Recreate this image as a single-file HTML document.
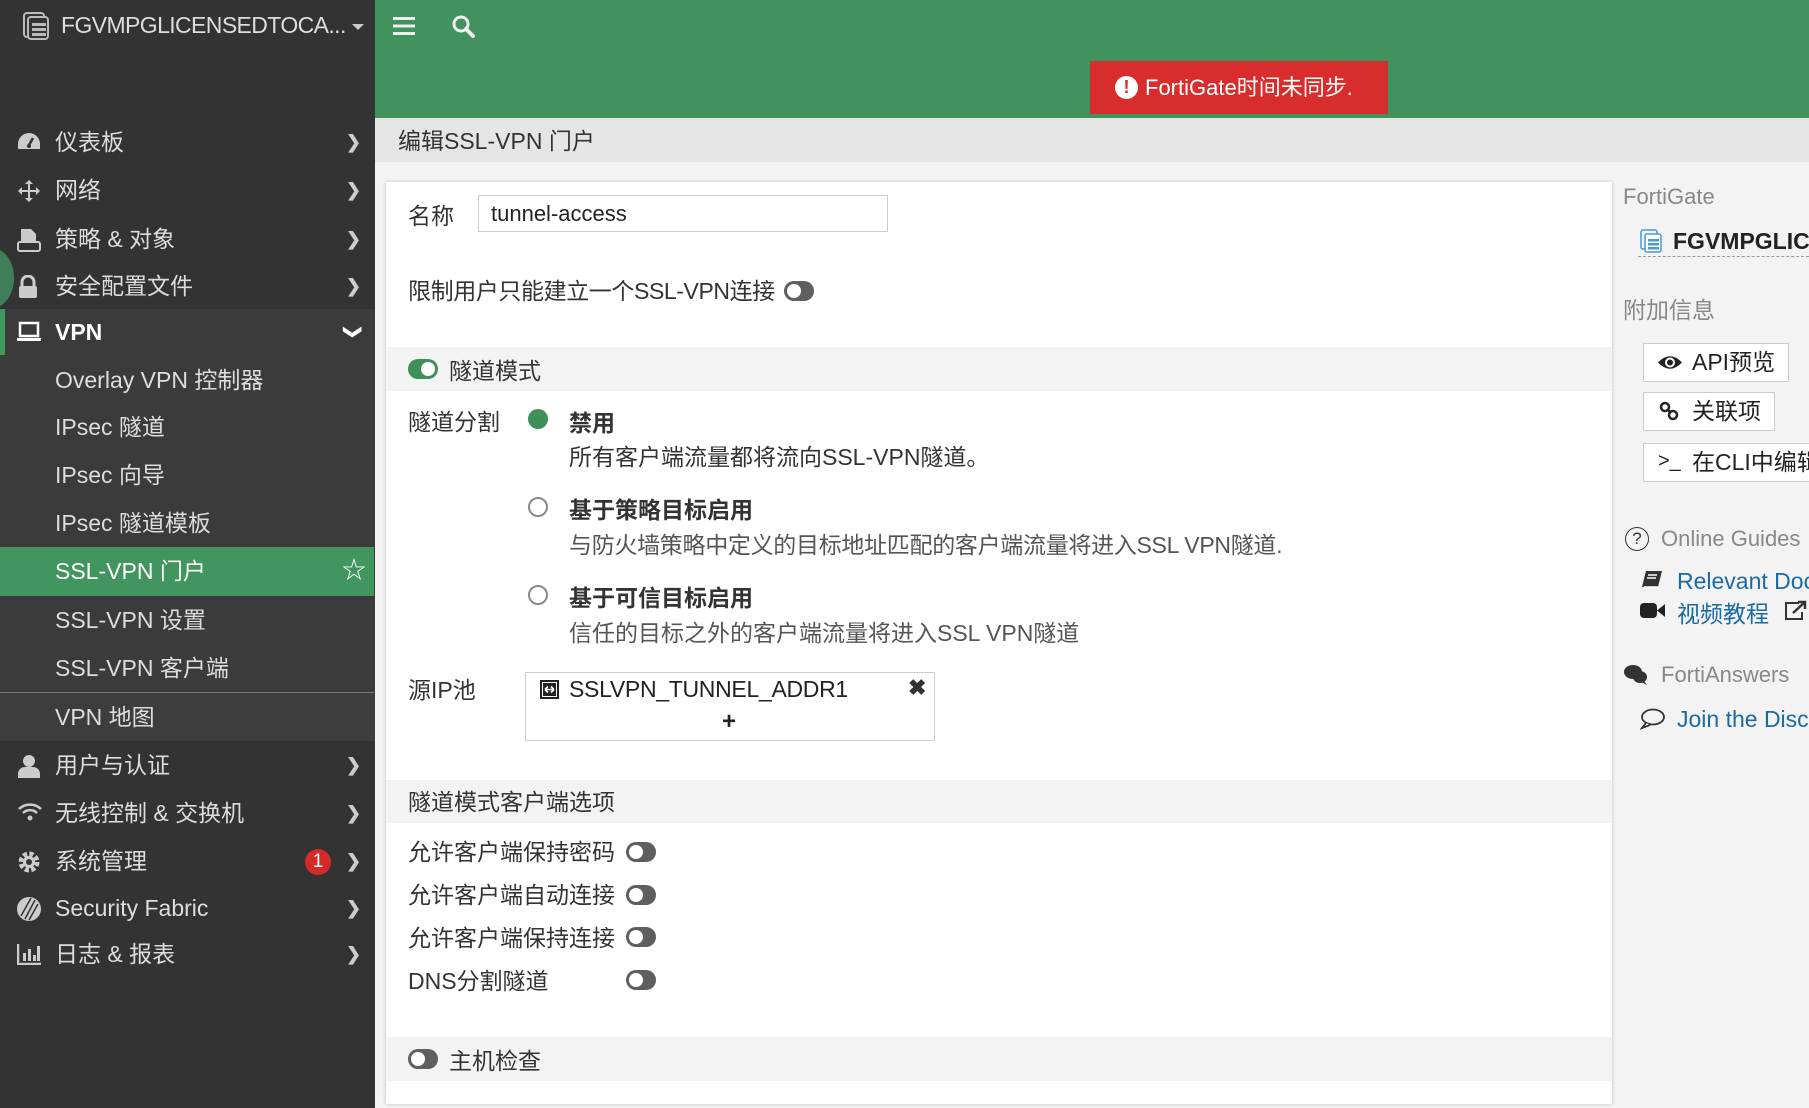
<!DOCTYPE html>
<html><head><meta charset="utf-8">
<style>
*{margin:0;padding:0;box-sizing:border-box}
body{width:1809px;height:1108px;overflow:hidden;position:relative;background:#f3f3f3;font-family:"Liberation Sans","Noto Sans CJK SC",sans-serif;color:#333}
.a{position:absolute;white-space:nowrap}
#side{position:absolute;left:0;top:0;width:375px;height:1108px;background:#333;overflow:hidden}
.row{position:absolute;left:0;width:375px;height:48px;line-height:48px;font-size:23px;color:#ddd}
.row .t{position:absolute;left:55px}
.row .ch{position:absolute;left:346px;top:0;color:#ccc;font-size:18px;font-weight:bold}
.row svg.ic{position:absolute;left:17px;top:13px}
.sub{background:#3b3b3b}
.tog{position:absolute;width:30px;height:20px;border-radius:10px;background:#5f5f5f}
.tog::after{content:"";position:absolute;left:3px;top:3px;width:14px;height:14px;border-radius:50%;background:#fff}
.tog.on{background:#3e8f58}
.tog.on::after{left:13px}
.lbl{font-size:23px;color:#333}
.btn{position:absolute;border:1px solid #ccc;background:#fff;height:39px;line-height:37px;font-size:23px;color:#222;padding-left:48px;white-space:nowrap;overflow:hidden}
</style></head><body>

<div id="side">
  <svg class="a" style="left:22px;top:11px" width="28" height="30" viewBox="0 0 28 30"><rect x="2" y="2" width="20" height="24" rx="3" fill="none" stroke="#bbb" stroke-width="2"/><rect x="6" y="6" width="20" height="22" rx="3" fill="#333" stroke="#bbb" stroke-width="2"/><rect x="10" y="12" width="14" height="3" fill="#bbb"/><rect x="10" y="17" width="14" height="3" fill="#bbb"/><rect x="10" y="22" width="14" height="3" fill="#bbb"/></svg>
  <div class="a" style="left:61px;top:12px;font-size:23px;letter-spacing:-0.6px;color:#ddd">FGVMPGLICENSEDTOCA...</div>
  <div class="a" style="left:352px;top:24px;border-left:6px solid transparent;border-right:6px solid transparent;border-top:6px solid #ccc"></div>

  <div class="row" style="top:118px"><svg class="ic" width="24" height="22" viewBox="0 0 24 22"><path d="M12 2A11 11 0 0 0 1 13v5h22v-5A11 11 0 0 0 12 2z" fill="#ccc"/><path d="M12 14l4-7" stroke="#333" stroke-width="2.5"/><circle cx="12" cy="15" r="2" fill="#333"/></svg><span class="t">仪表板</span><span class="ch">❯</span></div>
  <div class="row" style="top:166px"><svg class="ic" width="24" height="24" viewBox="0 0 24 24"><path d="M12 1l4 4h-3v6h6V8l4 4-4 4v-3h-6v6h3l-4 4-4-4h3v-6H5v3l-4-4 4-4v3h6V5H8z" fill="#ccc"/></svg><span class="t">网络</span><span class="ch">❯</span></div>
  <div class="row" style="top:215px"><svg class="ic" width="24" height="24" viewBox="0 0 24 24"><path d="M4 1h10l5 5v8H4z" fill="#ccc"/><rect x="1" y="14" width="22" height="9" rx="2" fill="none" stroke="#ccc" stroke-width="2"/></svg><span class="t">策略 &amp; 对象</span><span class="ch">❯</span></div>
  <div class="row" style="top:262px"><svg class="ic" width="22" height="24" viewBox="0 0 22 24"><path d="M5 11V7a6 6 0 0 1 12 0v4" fill="none" stroke="#ccc" stroke-width="3"/><rect x="2" y="11" width="18" height="12" rx="2" fill="#ccc"/></svg><span class="t">安全配置文件</span><span class="ch">❯</span></div>
  <div class="a" style="left:-30px;top:248px;width:44px;height:60px;border-radius:50%;background:#3e7f5a"></div>

  <div class="a sub" style="left:0;top:309px;width:375px;height:383px"></div>
  <div class="a" style="left:0;top:309px;width:5px;height:46px;background:#3e9a5c"></div>
  <div class="row" style="top:308px;color:#fff;font-weight:bold"><svg class="ic" width="24" height="22" viewBox="0 0 24 22"><rect x="3" y="2" width="18" height="13" fill="none" stroke="#fff" stroke-width="2.5"/><rect x="0" y="17" width="24" height="3" fill="#fff"/></svg><span class="t">VPN</span><span class="ch" style="transform:rotate(90deg);color:#fff">❯</span></div>
  <div class="row" style="top:356px"><span class="t">Overlay VPN 控制器</span></div>
  <div class="row" style="top:403px"><span class="t">IPsec 隧道</span></div>
  <div class="row" style="top:451px"><span class="t">IPsec 向导</span></div>
  <div class="row" style="top:499px"><span class="t">IPsec 隧道模板</span></div>
  <div class="a" style="left:0;top:547px;width:374px;height:49px;background:#41955e"></div>
  <div class="row" style="top:547px;color:#fff"><span class="t">SSL-VPN 门户</span><span class="ch" style="left:342px;color:#fff;font-size:24px;font-weight:normal">☆</span></div>
  <div class="row" style="top:596px"><span class="t">SSL-VPN 设置</span></div>
  <div class="row" style="top:644px"><span class="t">SSL-VPN 客户端</span></div>
  <div class="a" style="left:0;top:692px;width:374px;height:1px;background:#777"></div>
  <div class="a" style="left:0;top:693px;width:375px;height:48px;background:#3d3d3d"></div>
  <div class="row" style="top:693px"><span class="t">VPN 地图</span></div>

  <div class="row" style="top:741px"><svg class="ic" width="24" height="24" viewBox="0 0 24 24"><circle cx="12" cy="7" r="6" fill="#ccc"/><path d="M1 24v-4a7 7 0 0 1 7-7h8a7 7 0 0 1 7 7v4z" fill="#ccc"/></svg><span class="t">用户与认证</span><span class="ch">❯</span></div>
  <div class="row" style="top:789px"><svg class="ic" width="26" height="22" viewBox="0 0 26 22"><path d="M2 7a16 16 0 0 1 22 0M6 11a10 10 0 0 1 14 0" fill="none" stroke="#ccc" stroke-width="2.5"/><circle cx="13" cy="16" r="2.5" fill="#ccc"/></svg><span class="t">无线控制 &amp; 交换机</span><span class="ch">❯</span></div>
  <div class="row" style="top:837px"><svg class="ic" width="24" height="24" viewBox="0 0 24 24"><circle cx="12" cy="12" r="8" fill="none" stroke="#ccc" stroke-width="5" stroke-dasharray="4 2.3"/><circle cx="12" cy="12" r="6" fill="#ccc"/><circle cx="12" cy="12" r="3" fill="#333"/></svg><span class="t">系统管理</span><span class="a" style="left:305px;top:12px;width:26px;height:26px;border-radius:50%;background:#d42a2a;color:#fff;font-size:19px;line-height:26px;text-align:center">1</span><span class="ch">❯</span></div>
  <div class="row" style="top:884px"><svg class="ic" width="24" height="24" viewBox="0 0 24 24"><circle cx="12" cy="12" r="12" fill="#ccc"/><path d="M8 22L18 3M12 23L21 7M4 19L14 1" stroke="#333" stroke-width="1.5"/></svg><span class="t">Security Fabric</span><span class="ch">❯</span></div>
  <div class="row" style="top:930px"><svg class="ic" width="24" height="22" viewBox="0 0 24 22"><path d="M1 1v20h23" fill="none" stroke="#ccc" stroke-width="2.5"/><rect x="6" y="10" width="3" height="8" fill="#ccc"/><rect x="11" y="6" width="3" height="12" fill="#ccc"/><rect x="16" y="12" width="3" height="6" fill="#ccc"/><rect x="20" y="3" width="3" height="15" fill="#ccc"/></svg><span class="t">日志 &amp; 报表</span><span class="ch">❯</span></div>
</div>

<!-- header -->
<div class="a" style="left:375px;top:0;width:1434px;height:118px;background:#42925d"></div>
<svg class="a" style="left:393px;top:16px" width="22" height="20" viewBox="0 0 22 20"><rect y="1" width="22" height="3" fill="#eee"/><rect y="8.5" width="22" height="3" fill="#eee"/><rect y="16" width="22" height="3" fill="#eee"/></svg>
<svg class="a" style="left:451px;top:14px" width="24" height="24" viewBox="0 0 24 24"><circle cx="10" cy="10" r="7" fill="none" stroke="#eee" stroke-width="3"/><path d="M15 15l7 7" stroke="#eee" stroke-width="4" stroke-linecap="round"/></svg>
<div class="a" style="left:1090px;top:61px;width:298px;height:53px;background:#d92c2c;color:#fff;font-size:22px;line-height:53px;padding-left:55px">FortiGate时间未同步.</div>
<div class="a" style="left:1115px;top:76px;width:23px;height:23px;border-radius:50%;background:#fff;color:#d92c2c;font-weight:bold;font-size:18px;line-height:23px;text-align:center">!</div>

<!-- title bar -->
<div class="a" style="left:375px;top:118px;width:1434px;height:44px;background:#e5e5e5"></div>
<div class="a" style="left:398px;top:122px;font-size:23px;color:#333">编辑SSL-VPN 门户</div>

<!-- card -->
<div class="a" style="left:386px;top:182px;width:1226px;height:922px;background:#fff;box-shadow:0 0 4px rgba(0,0,0,.2)"></div>
<div class="a lbl" style="left:408px;top:197px">名称</div>
<div class="a" style="left:478px;top:195px;width:410px;height:37px;border:1px solid #ccc;font-size:22px;line-height:35px;padding-left:12px;color:#222">tunnel-access</div>
<div class="a lbl" style="left:408px;top:272px;letter-spacing:-0.4px">限制用户只能建立一个SSL-VPN连接</div>
<div class="tog" style="left:784px;top:281px"></div>

<div class="a" style="left:386px;top:347px;width:1226px;height:44px;background:#f3f3f3"></div>
<div class="tog on" style="left:408px;top:359px"></div>
<div class="a lbl" style="left:449px;top:352px">隧道模式</div>

<div class="a lbl" style="left:408px;top:403px">隧道分割</div>
<div class="a" style="left:528px;top:409px;width:20px;height:20px;border-radius:50%;background:#3e8f58"></div>
<div class="a lbl" style="left:569px;top:404px;font-weight:bold">禁用</div>
<div class="a lbl" style="left:569px;top:438px">所有客户端流量都将流向SSL-VPN隧道。</div>
<div class="a" style="left:528px;top:497px;width:20px;height:20px;border-radius:50%;border:2.5px solid #888"></div>
<div class="a lbl" style="left:569px;top:491px;font-weight:bold">基于策略目标启用</div>
<div class="a lbl" style="left:569px;top:526px;color:#555;letter-spacing:-0.3px">与防火墙策略中定义的目标地址匹配的客户端流量将进入SSL VPN隧道.</div>
<div class="a" style="left:528px;top:585px;width:20px;height:20px;border-radius:50%;border:2.5px solid #888"></div>
<div class="a lbl" style="left:569px;top:579px;font-weight:bold">基于可信目标启用</div>
<div class="a lbl" style="left:569px;top:614px;color:#555">信任的目标之外的客户端流量将进入SSL VPN隧道</div>

<div class="a lbl" style="left:408px;top:671px">源IP池</div>
<div class="a" style="left:525px;top:672px;width:410px;height:69px;border:1px solid #ccc"></div>
<svg class="a" style="left:540px;top:680px" width="19" height="19" viewBox="0 0 19 19"><rect width="19" height="19" fill="#222"/><rect x="2" y="2" width="15" height="15" fill="#fff"/><rect x="3" y="3" width="13" height="13" fill="#222"/><path d="M5 9.5h9M5 9.5l3-3M5 9.5l3 3M14 9.5l-3-3M14 9.5l-3 3" stroke="#fff" stroke-width="1.6"/></svg>
<div class="a" style="left:569px;top:676px;font-size:23px;color:#222;letter-spacing:-0.3px">SSLVPN_TUNNEL_ADDR1</div>
<div class="a" style="left:908px;top:675px;font-size:22px;color:#333;font-weight:bold">✖</div>
<div class="a" style="left:722px;top:708px;font-size:24px;font-weight:bold;color:#222">+</div>

<div class="a" style="left:386px;top:780px;width:1226px;height:43px;background:#f3f3f3"></div>
<div class="a lbl" style="left:408px;top:783px">隧道模式客户端选项</div>
<div class="a lbl" style="left:408px;top:833px">允许客户端保持密码</div><div class="tog" style="left:626px;top:842px"></div>
<div class="a lbl" style="left:408px;top:876px">允许客户端自动连接</div><div class="tog" style="left:626px;top:885px"></div>
<div class="a lbl" style="left:408px;top:919px">允许客户端保持连接</div><div class="tog" style="left:626px;top:927px"></div>
<div class="a lbl" style="left:408px;top:962px">DNS分割隧道</div><div class="tog" style="left:626px;top:970px"></div>

<div class="a" style="left:386px;top:1037px;width:1226px;height:44px;background:#f3f3f3"></div>
<div class="tog" style="left:408px;top:1049px"></div>
<div class="a lbl" style="left:449px;top:1042px">主机检查</div>

<!-- right panel -->
<div class="a" style="left:1623px;top:184px;font-size:22px;color:#888">FortiGate</div>
<svg class="a" style="left:1640px;top:229px" width="22" height="24" viewBox="0 0 22 24"><rect x="1" y="1" width="16" height="19" rx="2" fill="none" stroke="#4a9ad6" stroke-width="1.5"/><rect x="5" y="5" width="16" height="18" rx="2" fill="#fff" stroke="#4a9ad6" stroke-width="1.5"/><rect x="8" y="10" width="11" height="2.5" fill="#4a9ad6"/><rect x="8" y="14" width="11" height="2.5" fill="#4a9ad6"/><rect x="8" y="18" width="11" height="2.5" fill="#4a9ad6"/></svg>
<div class="a" style="left:1673px;top:228px;font-size:23px;font-weight:bold;color:#222">FGVMPGLICENSED</div>
<div class="a" style="left:1638px;top:256px;width:171px;border-top:1px dashed #999"></div>
<div class="a" style="left:1623px;top:291px;font-size:23px;color:#888">附加信息</div>
<div class="btn" style="left:1643px;top:343px;width:146px">API预览</div>
<svg class="a" style="left:1657px;top:354px" width="26" height="17" viewBox="0 0 26 17"><path d="M1 8.5Q13-4 25 8.5Q13 21 1 8.5z" fill="#222"/><circle cx="13" cy="8.5" r="5" fill="#fff"/><circle cx="13" cy="8.5" r="3" fill="#222"/></svg>
<div class="btn" style="left:1643px;top:392px;width:132px">关联项</div>
<svg class="a" style="left:1659px;top:401px" width="20" height="20" viewBox="0 0 20 20"><circle cx="6" cy="6" r="4" fill="none" stroke="#222" stroke-width="2.5"/><circle cx="14" cy="14" r="4" fill="none" stroke="#222" stroke-width="2.5"/><path d="M8 8l4 4" stroke="#222" stroke-width="2.5"/></svg>
<div class="btn" style="left:1643px;top:443px;width:170px">在CLI中编辑</div>
<div class="a" style="left:1658px;top:450px;font-size:20px;color:#222">&gt;_</div>
<div class="a" style="left:1625px;top:527px;width:24px;height:24px;border-radius:50%;border:1.5px solid #333;text-align:center;font-size:17px;line-height:21px;color:#333">?</div>
<div class="a" style="left:1661px;top:526px;font-size:22px;color:#888">Online Guides</div>
<svg class="a" style="left:1641px;top:570px" width="22" height="20" viewBox="0 0 22 20"><path d="M5 1h16l-4 16H1z" fill="#333"/><path d="M3 17h14" stroke="#fff" stroke-width="1.5"/><path d="M7 5h9M6 8h9" stroke="#fff" stroke-width="1.5"/></svg>
<div class="a" style="left:1677px;top:568px;font-size:23px;color:#1a6aa3">Relevant Documentation</div>
<svg class="a" style="left:1640px;top:602px" width="25" height="17" viewBox="0 0 25 17"><rect x="0" y="1" width="17" height="15" rx="4" fill="#222"/><path d="M17 8.5L25 2v13z" fill="#222"/></svg>
<div class="a" style="left:1677px;top:595px;font-size:23px;color:#1a6aa3">视频教程</div>
<svg class="a" style="left:1783px;top:600px" width="24" height="22" viewBox="0 0 24 22"><path d="M16 3H3v16h16v-7" fill="none" stroke="#333" stroke-width="2"/><path d="M10 13L22 2M15 2h7v7" fill="none" stroke="#333" stroke-width="2.5"/></svg>
<svg class="a" style="left:1624px;top:664px" width="24" height="22" viewBox="0 0 24 22"><ellipse cx="9" cy="8" rx="9" ry="7" fill="#333"/><ellipse cx="16" cy="13" rx="7" ry="6" fill="#333"/><path d="M20 17l3 4-6-3z" fill="#333"/></svg>
<div class="a" style="left:1661px;top:662px;font-size:22px;color:#888">FortiAnswers</div>
<svg class="a" style="left:1640px;top:708px" width="25" height="22" viewBox="0 0 25 22"><ellipse cx="13" cy="9" rx="11" ry="7.5" fill="none" stroke="#333" stroke-width="1.8"/><path d="M6 15l-4 5 8-3" fill="#fff" stroke="#333" stroke-width="1.8"/></svg>
<div class="a" style="left:1677px;top:706px;font-size:23px;color:#1a6aa3">Join the Discussion</div>
</body></html>
